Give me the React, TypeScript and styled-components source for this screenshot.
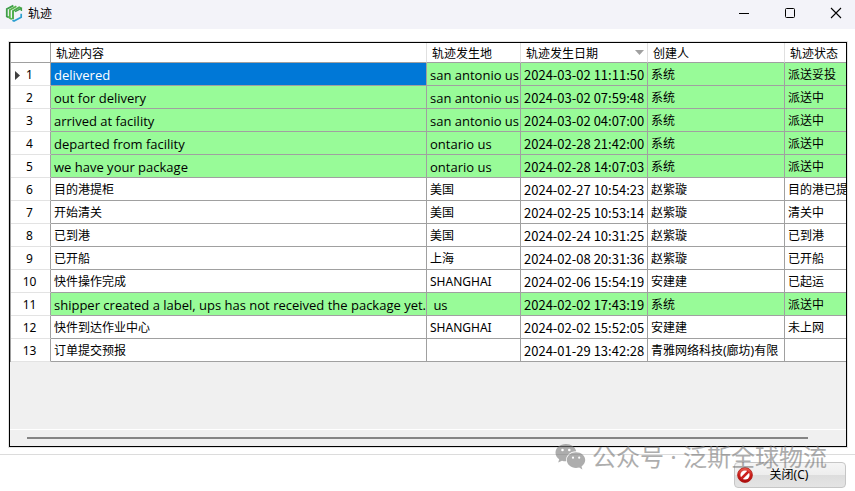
import React from 'react';
import styled, { createGlobalStyle, css } from 'styled-components';

const GlobalStyle = createGlobalStyle`
  * { box-sizing: border-box; }
  body {
    margin: 0;
    background: #ffffff;
    color: #000000;
    font-family: "Noto Sans", "Noto Sans CJK SC", sans-serif;
    font-size: 12px;
  }
`;

const Window = styled.div`
  position: relative;
  display: flex;
  flex-direction: column;
  min-height: 100vh;
  overflow: hidden;
`;

const TitleBar = styled.header`
  display: flex;
  align-items: center;
  height: 29px;
  padding-left: 5px;
  background: #f3f3f9;
`;

const AppIcon = styled.span`
  display: flex;
  padding-bottom: 3px;
`;

const Title = styled.h1`
  flex: 1;
  margin: 0 0 3px 5px;
  font: 12px/18px "Noto Sans CJK SC", sans-serif;
`;

const CaptionButton = styled.button`
  display: grid;
  place-items: center;
  width: 46px;
  height: 29px;
  padding: 0 0 3px 8px;
  border: 0;
  background: transparent;
`;

const Grid = styled.main`
  flex: 1;
  display: flex;
  flex-direction: column;
  margin: 13px 8px 7px 9px;
  border: 1px solid #000000;
  background: #f0f0f0;
  box-shadow: 0 0 0 1px #e3e3e3;
`;

const Viewport = styled.div`
  flex: 1;
  overflow: hidden;
`;

const Table = styled.table`
  width: 100%;
  min-width: 836px;
  table-layout: fixed;
  border-collapse: separate;
  border-spacing: 0;
  border-left: 1px solid #a0a0a0;
`;

const Col = styled.col<{ $width?: number }>`
  ${({ $width }) => $width && `width: ${$width}px;`}
`;

const HeadCell = styled.th<{ $corner?: boolean }>`
  height: 20px;
  padding: 0 3px 0 5px;
  border-right: 1px solid ${({ $corner }) => ($corner ? '#a0a0a0' : '#e0e0e0')};
  border-bottom: 1px solid #a0a0a0;
  background: #ffffff;
  font: 12px/18px "Noto Sans CJK SC", sans-serif;
  text-align: left;
  white-space: nowrap;
  overflow: hidden;
  &:last-child { border-right: 0; }
`;

const HeadContent = styled.div`
  display: flex;
  align-items: center;
  justify-content: space-between;
`;

const RowHead = styled.th`
  height: 23px;
  padding: 2px 2px 0 0;
  border-right: 1px solid #a0a0a0;
  border-bottom: 1px solid #e3e3e3;
  background: #ffffff;
  font-size: 12px;
  font-weight: 400;
  line-height: 20px;
`;

const RowNumber = styled.div`
  display: grid;
  grid-template-columns: 8px 16px 8px;
  align-items: center;
  justify-content: center;
  justify-items: center;
`;

const CurrentMark = styled.svg`
  display: block;
`;

const Cell = styled.td<{ $tone?: 'green' | 'selected'; $kind: 'latin' | 'date' | 'text' }>`
  height: 23px;
  padding: 2px 0 0 3px;
  border-right: 1px solid #a0a0a0;
  border-bottom: 1px solid #a0a0a0;
  background: #ffffff;
  line-height: 20px;
  white-space: pre;
  overflow: hidden;
  ${({ $kind }) => $kind === 'latin' && css`font-family: "Open Sans", sans-serif; font-size: 13px;`}
  ${({ $kind }) => $kind === 'date' && css`font-family: "Noto Sans CJK SC", sans-serif; font-size: 13px;`}
  ${({ $tone }) => $tone === 'green' && css`background: #98fb98;`}
  ${({ $tone }) => $tone === 'selected' && css`background: #0078d7; color: #ffffff;`}
  &:last-child { border-right: 0; }
`;

const ScrollTrack = styled.div`
  height: 17px;
  padding: 7px 38px 0 17px;
  border-top: 1px solid #ffffff;
`;

const ScrollThumb = styled.div`
  height: 2px;
  background: #858585;
`;

const Footer = styled.footer`
  display: flex;
  justify-content: flex-end;
  height: 37px;
  padding: 7px 9px 3px;
  border-top: 1px solid #dcdcdc;
`;

const CloseButton = styled.button`
  display: flex;
  align-items: center;
  width: 112px;
  height: 26px;
  padding: 0 2px;
  border: 1px solid #c6c6c6;
  border-radius: 4px;
  background: linear-gradient(#f5f5f5, #ededed 50%, #dddddd 51%, #e4e4e4);
  color: #000000;
  font: 12px/18px "Noto Sans", "Noto Sans CJK SC", sans-serif;
`;

const CloseLabel = styled.span`
  flex: 1;
  padding-right: 18px;
  text-align: center;
`;

const Watermark = styled.div`
  position: absolute;
  right: 28px;
  bottom: 18px;
  display: flex;
  align-items: center;
  gap: 6px;
  color: #777777;
  opacity: 0.6;
  font: 24px/32px "Noto Sans", "Noto Sans CJK SC", sans-serif;
  white-space: pre;
  pointer-events: none;
`;

const Logo = () => (
  <svg width="18" height="18" viewBox="0 0 18 18" fill="none" aria-hidden="true">
    <path d="M8.4 1.6 1.8 5v7.4l2 1.1" stroke="#3f9f4a" strokeWidth="1.8" />
    <path d="M11.4 2.3 4.8 6v8l2 1.2" stroke="#58b548" strokeWidth="1.8" />
    <path d="M16.2 4.4 14.2 3.4 8 7v8.2" stroke="#4dac49" strokeWidth="1.9" />
    <path d="m10 7.6 6.4-3.3v2.8" stroke="#3f9f4a" strokeWidth="1.4" />
    <path d="M7.4 16.2 9 17l7.2-3.8v-3.4" stroke="#2d9fd0" strokeWidth="1.7" />
  </svg>
);

const WeChat = () => (
  <svg width="31" height="28" viewBox="0 0 31 28" aria-hidden="true">
    <path fill="#777777" d="M11 1C5 1 .5 4.8.5 9.7c0 2.8 1.5 5 3.7 6.6l-1 3.3 3.8-1.9c1.5.4 2.8.6 4.2.5-.9-5.5 3.9-10 10-10C20.3 4 16 1 11 1Z" />
    <path fill="#777777" d="M21 9.3c-5.1 0-9.2 3.4-9.2 7.8s4.1 7.9 9.2 7.9c1.1 0 2.2-.2 3.2-.5l3.2 1.9-.9-3c2.3-1.5 3.7-3.7 3.7-6.3 0-4.4-4.1-7.8-9.2-7.8Z" />
    <g fill="#ffffff">
      <circle cx="7.5" cy="7" r="1.3" /><circle cx="14.3" cy="7" r="1.3" />
      <circle cx="18" cy="14.7" r="1.1" /><circle cx="24.2" cy="14.7" r="1.1" />
    </g>
  </svg>
);

const Forbidden = () => (
  <svg width="16" height="16" viewBox="0 0 16 16" aria-hidden="true">
    <defs>
      <linearGradient id="red" x1="0" y1="0" x2="0" y2="1">
        <stop stopColor="#ed6254" /><stop offset=".5" stopColor="#cc201c" /><stop offset="1" stopColor="#a90b0d" />
      </linearGradient>
    </defs>
    <circle cx="8" cy="8" r="7.4" fill="url(#red)" stroke="#ad1712" strokeWidth=".8" />
    <circle cx="8" cy="8" r="4.6" fill="#ffffff" />
    <path d="m4.5 11.5 7-7" stroke="#cc201c" strokeWidth="2.5" />
  </svg>
);

const rows = [
  ['delivered', 'san antonio us', '2024-03-02 11:11:50', '系统', '派送妥投'],
  ['out for delivery', 'san antonio us', '2024-03-02 07:59:48', '系统', '派送中'],
  ['arrived at facility', 'san antonio us', '2024-03-02 04:07:00', '系统', '派送中'],
  ['departed from facility', 'ontario us', '2024-02-28 21:42:00', '系统', '派送中'],
  ['we have your package', 'ontario us', '2024-02-28 14:07:03', '系统', '派送中'],
  ['目的港提柜', '美国', '2024-02-27 10:54:23', '赵紫璇', '目的港已提柜'],
  ['开始清关', '美国', '2024-02-25 10:53:14', '赵紫璇', '清关中'],
  ['已到港', '美国', '2024-02-24 10:31:25', '赵紫璇', '已到港'],
  ['已开船', '上海', '2024-02-08 20:31:36', '赵紫璇', '已开船'],
  ['快件操作完成', 'SHANGHAI', '2024-02-06 15:54:19', '安建建', '已起运'],
  ['shipper created a label, ups has not received the package yet.', ' us', '2024-02-02 17:43:19', '系统', '派送中'],
  ['快件到达作业中心', 'SHANGHAI', '2024-02-02 15:52:05', '安建建', '未上网'],
  ['订单提交预报', '', '2024-01-29 13:42:28', '青雅网络科技(廊坊)有限', ''],
];

const kindOf = (text: string) => {
  if (/^[a-z ,.]+$/.test(text)) return 'latin';
  return /^\d{4}-/.test(text) ? 'date' : 'text';
};

export default function App() {
  return (
    <Window>
      <GlobalStyle />
      <TitleBar>
        <AppIcon><Logo /></AppIcon>
        <Title>轨迹</Title>
        <CaptionButton aria-label="最小化">
          <svg width="12" height="12"><path d="M1 6.5h10" stroke="#000" /></svg>
        </CaptionButton>
        <CaptionButton aria-label="最大化">
          <svg width="12" height="12"><rect x="1.5" y="1.5" width="9" height="9" rx="1" fill="none" stroke="#000" /></svg>
        </CaptionButton>
        <CaptionButton aria-label="关闭窗口">
          <svg width="12" height="12"><path d="m1 1 10 10M11 1 1 11" stroke="#000" strokeWidth="1.1" /></svg>
        </CaptionButton>
      </TitleBar>
      <Grid>
        <Viewport>
          <Table>
            <colgroup>
              <Col $width={40} /><Col $width={376} /><Col $width={94} /><Col $width={127} /><Col $width={137} /><Col />
            </colgroup>
            <thead>
              <tr>
                <HeadCell $corner aria-label="行号" />
                <HeadCell>轨迹内容</HeadCell>
                <HeadCell>轨迹发生地</HeadCell>
                <HeadCell aria-sort="descending">
                  <HeadContent>
                    轨迹发生日期
                    <svg width="9" height="5" aria-hidden="true"><path d="M0 0h9L4.5 5Z" fill="#a0a0a0" /></svg>
                  </HeadContent>
                </HeadCell>
                <HeadCell>创建人</HeadCell>
                <HeadCell>轨迹状态</HeadCell>
              </tr>
            </thead>
            <tbody>
              {rows.map((row, index) => {
                const green = row[3] === '系统';
                return (
                  <tr key={row[2]}>
                    <RowHead scope="row">
                      <RowNumber>
                        <span>{index === 0 && <CurrentMark width="5" height="9" aria-hidden="true"><path d="M0 0v9l5-4.5Z" fill="#404040" /></CurrentMark>}</span>
                        <span>{index + 1}</span>
                      </RowNumber>
                    </RowHead>
                    {row.map((text, column) => (
                      <Cell
                        key={column}
                        $kind={kindOf(text)}
                        $tone={index === 0 && column === 0 ? 'selected' : green ? 'green' : undefined}
                      >
                        {text}
                      </Cell>
                    ))}
                  </tr>
                );
              })}
            </tbody>
          </Table>
        </Viewport>
        <ScrollTrack><ScrollThumb /></ScrollTrack>
      </Grid>
      <Footer>
        <CloseButton><Forbidden /><CloseLabel>关闭(C)</CloseLabel></CloseButton>
      </Footer>
      <Watermark><WeChat />公众号 · 泛斯全球物流</Watermark>
    </Window>
  );
}
